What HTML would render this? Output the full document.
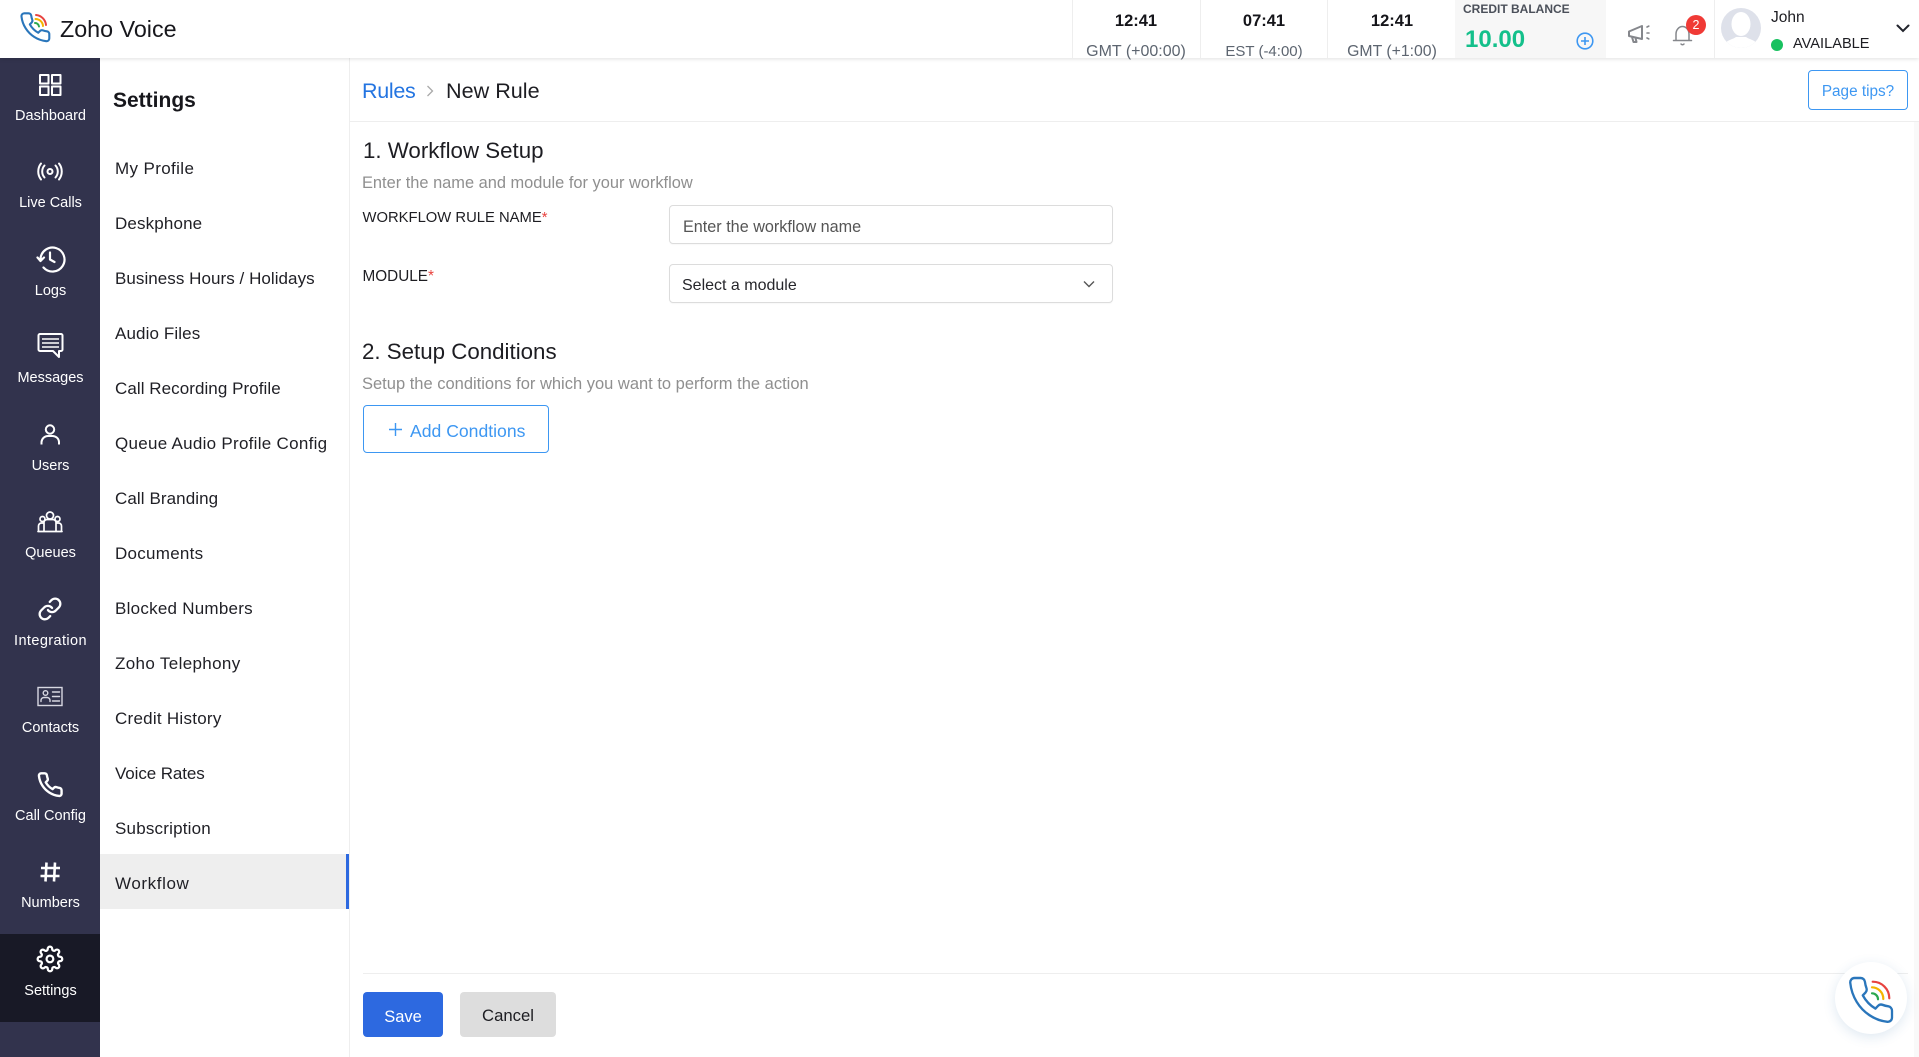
<!DOCTYPE html>
<html lang="en"><head><meta charset="utf-8"><title>Zoho Voice</title>
<style>
*{box-sizing:border-box}
html,body{margin:0;padding:0;width:1919px;height:1057px;overflow:hidden;background:#fff;font-family:"Liberation Sans",Arial,sans-serif;color:#1a1a1f}
.t{position:absolute;line-height:20px;margin-top:-9px;white-space:nowrap}
.c{transform:translateX(-50%)}
.b{position:absolute}
svg{position:absolute;overflow:visible}
.nav{font-size:14.5px;color:#fff;left:50.5px;transform:translateX(-50%)}
.ic{fill:none;stroke:#fff;stroke-width:2;stroke-linecap:round;stroke-linejoin:round}
.m{font-size:17px;left:115px;color:#1f1f25}
.tm{font-size:16.5px;font-weight:bold;color:#15151a;transform:translateX(-50%)}
.tz{font-size:16px;color:#5d6570;transform:translateX(-50%)}
.sep{position:absolute;top:0;width:1px;height:58px;background:#eeeeee}
.h2{font-size:22.3px;color:#1d1d22}
.sub{font-size:16.4px;color:#8f8f8f}
.lab{font-size:14.8px;color:#1d1d22}
.box{position:absolute;border:1px solid #dcdcdc;border-radius:4px;background:#fff;left:669px;width:444px;box-shadow:0 1px 1px rgba(0,0,0,.03)}
</style></head><body>

<!-- header -->
<div class="b" style="left:0;top:0;width:1919px;height:58px;background:#fff;box-shadow:0 1px 4px rgba(0,0,0,.12);z-index:2"></div>
<div style="position:absolute;left:0;top:0;width:1919px;height:58px;z-index:3">
<svg style="left:0;top:0" width="70" height="58" viewBox="0 0 70 58" fill="none" stroke-linecap="round">
<g transform="translate(18.5 10.5) scale(1.4)"><path stroke="#2a76bb" stroke-width="1.5" stroke-linejoin="round" d="M22 16.92v3a2 2 0 0 1-2.18 2 19.79 19.79 0 0 1-8.63-3.07 19.5 19.5 0 0 1-6-6 19.79 19.79 0 0 1-3.07-8.67A2 2 0 0 1 4.11 2h3a2 2 0 0 1 2 1.72 12.84 12.84 0 0 0 .7 2.81 2 2 0 0 1-.45 2.11L8.09 9.91a16 16 0 0 0 6 6l1.27-1.27a2 2 0 0 1 2.11-.45 12.84 12.84 0 0 0 2.81.7A2 2 0 0 1 22 16.92z"/></g>
<path d="M36 15A11 11 0 0 1 46 25" stroke="#e8433f" stroke-width="2"/>
<path d="M35.5 19A7.5 7.5 0 0 1 43 26" stroke="#f4b400" stroke-width="2"/>
<path d="M35 23A4 4 0 0 1 39 26.500" stroke="#2aa84f" stroke-width="2"/>
</svg>
<span class="t" style="left:60px;top:28px;font-size:23.3px;color:#17171c">Zoho Voice</span>

<div class="sep" style="left:1072px"></div><div class="sep" style="left:1200px"></div><div class="sep" style="left:1327px"></div>
<span class="t tm" style="left:1136px;top:20px">12:41</span><span class="t tz" style="left:1136px;top:51px">GMT (+00:00)</span>
<span class="t tm" style="left:1264px;top:20px">07:41</span><span class="t tz" style="left:1264px;top:51px;font-size:15px">EST (-4:00)</span>
<span class="t tm" style="left:1392px;top:20px">12:41</span><span class="t tz" style="left:1392px;top:51px;font-size:15.8px">GMT (+1:00)</span>

<div class="b" style="left:1455px;top:0;width:151px;height:58px;background:#f7f7f7"></div>
<span class="t" style="left:1463px;top:8px;font-size:12px;font-weight:bold;color:#4b505a">CREDIT BALANCE</span>
<span class="t" style="left:1465px;top:39px;font-size:24px;font-weight:bold;color:#14c08b">10.00</span>
<svg style="left:1576px;top:32px" width="18" height="18" viewBox="0 0 18 18" fill="none" stroke="#3d97f2" stroke-width="1.6"><circle cx="9" cy="9" r="7.8"/><path d="M5 9h8M9 5v8"/></svg>
<div class="sep" style="left:1714px"></div>

<svg style="left:1627px;top:24px" width="26" height="20" viewBox="0 0 26 20" fill="none" stroke="#85878c" stroke-width="2" stroke-linejoin="round" stroke-linecap="round"><path d="M2 7.500 15 2v13L2 12zM5 13l1.500 5h3l-1-4"/><path d="M20 3l2-1M20 9h3M20 14l2 1" stroke-width="1.600" stroke-dasharray="2 1"/></svg>
<svg style="left:1672px;top:24px" width="22" height="22" viewBox="0 0 22 22" fill="none" stroke="#85878c" stroke-width="1.500" stroke-linecap="round"><path d="M1.500 16.500h18M4 16.500V10a6.500 7.500 0 0 1 13 0v6.500M9 20c1 1 2 1 3 0"/></svg>
<div class="b" style="left:1686px;top:15px;width:20px;height:20px;border-radius:50%;background:#f03a36;color:#fff;font-size:12.5px;line-height:20px;text-align:center">2</div>

<svg style="left:1721px;top:8px" width="40" height="40" viewBox="0 0 40 40"><defs><clipPath id="av"><circle cx="20" cy="20" r="20"/></clipPath></defs><circle cx="20" cy="20" r="20" fill="#dee1ea"/><g clip-path="url(#av)"><ellipse cx="20" cy="16" rx="9.500" ry="12" fill="#fff"/><path d="M3 40c0-8 8-8 12-11h10c4 3 12 3 12 11z" fill="#fff"/></g></svg>
<span class="t" style="left:1771px;top:17px;font-size:15.5px;color:#1d1d22">John</span>
<div class="b" style="left:1771px;top:39px;width:12px;height:12px;border-radius:50%;background:#18c15f"></div>
<span class="t" style="left:1793px;top:43px;font-size:14.6px;color:#1d1d22">AVAILABLE</span>
<svg style="left:1896px;top:24px" width="14" height="9" viewBox="0 0 14 9" fill="none" stroke="#22242c" stroke-width="2" stroke-linecap="round"><path d="M1.500 1.500 7 7l5.500-5.500"/></svg>
</div>

<!-- sidebar -->
<div class="b" style="left:0;top:58px;width:100px;height:999px;background:#32334d"></div>
<div class="b" style="left:0;top:934px;width:100px;height:88px;background:#181926"></div>
<svg style="left:0;top:0" width="100" height="1057" viewBox="0 0 100 1057">
<g class="ic">
<rect x="40" y="75" width="8.500" height="8.500"/><rect x="52" y="75" width="8.500" height="8.500"/><rect x="40" y="86.500" width="8.500" height="8.500"/><rect x="52" y="86.500" width="8.500" height="8.500"/>
<circle cx="50" cy="171.500" r="2.500"/><path d="M44.500 165.500a9 9 0 0 0 0 12M55.500 165.500a9 9 0 0 1 0 12M41 163.500a13 13 0 0 0 0 16M59 163.500a13 13 0 0 1 0 16"/>
<path d="M40.500 259a12 12 0 1 1 3 8.500M37.500 257.500l3 3.500 3.500-3.500M50 252.500v7l4.500 2.500" stroke-width="2.200"/>
<path d="M40 334h21a1.500 1.500 0 0 1 1.500 1.500v14a1.500 1.500 0 0 1-1.500 1.500h-2v6l-6-6H40a1.500 1.500 0 0 1-1.500-1.500v-14A1.500 1.500 0 0 1 40 334z"/><path d="M42 339h17M42 343h17M42 347h17" stroke-linecap="butt" stroke-width="1.600"/>
<circle cx="50" cy="429.500" r="4.200"/><path d="M41.500 444.500v-2.500a6.500 6.500 0 0 1 6.500-6h4a6.500 6.500 0 0 1 7 6v2.500" stroke-linecap="butt"/>
<circle cx="50" cy="515.500" r="3.500" stroke-width="1.700"/><circle cx="42.500" cy="519" r="2.500" stroke-width="1.700"/><circle cx="57.500" cy="519" r="2.500" stroke-width="1.700"/><path d="M38.500 531v-5a3 3 0 0 1 3-3h2M61.500 531v-5a3 3 0 0 0-3-3h-2M44 531v-8a3 3 0 0 1 3-3.500h6a3 3 0 0 1 3 3.500v8M38 531.500h24" stroke-width="1.700"/>
<g transform="translate(37.500 596.500) scale(1.04)" stroke-width="2.200"><path d="M10 13a5 5 0 0 0 7.540.54l3-3a5 5 0 0 0-7.070-7.070l-1.720 1.710"/><path d="M14 11a5 5 0 0 0-7.540-.54l-3 3a5 5 0 0 0 7.070 7.070l1.710-1.710"/></g>
<g stroke="#d8d8e2" stroke-width="1.400" stroke-linejoin="miter"><rect x="38" y="687.500" width="24" height="18"/><circle cx="45.500" cy="693" r="2.300"/><path d="M41 701.500v-1.500a3 3 0 0 1 3-2.500h3a3 3 0 0 1 3 2.500v1.500M52.500 692h7M52.500 696.500h7M52.500 701h7"/></g>
<g transform="translate(36.500 771) scale(1.14)" stroke-width="2.100"><path d="M22 16.920v3a2 2 0 0 1-2.180 2 19.790 19.790 0 0 1-8.630-3.070 19.500 19.500 0 0 1-6-6 19.790 19.790 0 0 1-3.070-8.670A2 2 0 0 1 4.110 2h3a2 2 0 0 1 2 1.720 12.840 12.840 0 0 0 .7 2.810 2 2 0 0 1-.45 2.110L8.090 9.910a16 16 0 0 0 6 6l1.270-1.270a2 2 0 0 1 2.110-.45 12.840 12.840 0 0 0 2.810.7A2 2 0 0 1 22 16.920z"/></g>
<path d="M46.500 862.500l-1 19M55 862.500l-1 19M41 868h19M40.500 876h19" stroke-width="2.600" stroke-linecap="butt"/>
<g transform="translate(36.500 945.500) scale(1.12)" stroke-width="2"><circle cx="12" cy="12" r="3"/><path d="M19.400 15a1.650 1.650 0 0 0 .33 1.820l.06.06a2 2 0 0 1 0 2.830 2 2 0 0 1-2.830 0l-.06-.06a1.650 1.650 0 0 0-1.820-.33 1.650 1.650 0 0 0-1 1.510V21a2 2 0 0 1-2 2 2 2 0 0 1-2-2v-.09A1.650 1.650 0 0 0 9 19.400a1.650 1.650 0 0 0-1.820.33l-.06.06a2 2 0 0 1-2.830 0 2 2 0 0 1 0-2.830l.06-.06a1.650 1.650 0 0 0 .33-1.820 1.650 1.650 0 0 0-1.510-1H3a2 2 0 0 1-2-2 2 2 0 0 1 2-2h.09A1.650 1.650 0 0 0 4.600 9a1.650 1.650 0 0 0-.33-1.820l-.06-.06a2 2 0 0 1 0-2.830 2 2 0 0 1 2.830 0l.06.06a1.650 1.650 0 0 0 1.820.33H9a1.650 1.650 0 0 0 1-1.510V3a2 2 0 0 1 2-2 2 2 0 0 1 2 2v.09a1.650 1.650 0 0 0 1 1.510 1.650 1.650 0 0 0 1.820-.33l.06-.06a2 2 0 0 1 2.830 0 2 2 0 0 1 0 2.830l-.06.06a1.650 1.650 0 0 0-.33 1.820V9a1.650 1.650 0 0 0 1.510 1H21a2 2 0 0 1 2 2 2 2 0 0 1-2 2h-.09a1.650 1.650 0 0 0-1.510 1z"/></g>
</g></svg>
<span class="t nav" style="top:115px">Dashboard</span>
<span class="t nav" style="top:202px">Live Calls</span>
<span class="t nav" style="top:290px">Logs</span>
<span class="t nav" style="top:377px">Messages</span>
<span class="t nav" style="top:465px">Users</span>
<span class="t nav" style="top:552px">Queues</span>
<span class="t nav" style="top:640px;letter-spacing:.4px">Integration</span>
<span class="t nav" style="top:727px">Contacts</span>
<span class="t nav" style="top:815px">Call Config</span>
<span class="t nav" style="top:902px">Numbers</span>
<span class="t nav" style="top:990px">Settings</span>

<!-- settings menu -->
<div class="b" style="left:349px;top:58px;width:1px;height:999px;background:#eeeeee"></div>
<span class="t" style="left:113px;top:100px;font-size:21px;font-weight:bold;color:#17171c">Settings</span>
<div class="b" style="left:100px;top:854px;width:249px;height:55px;background:#eeeeee"></div>
<div class="b" style="left:346px;top:854px;width:3px;height:55px;background:#2d69e0"></div>
<span class="t m" style="top:167.500px;letter-spacing:.37px">My Profile</span>
<span class="t m" style="top:222.500px;letter-spacing:.14px">Deskphone</span>
<span class="t m" style="top:277.500px;letter-spacing:.05px">Business Hours / Holidays</span>
<span class="t m" style="top:332.500px;letter-spacing:.11px">Audio Files</span>
<span class="t m" style="top:387.500px;letter-spacing:.06px">Call Recording Profile</span>
<span class="t m" style="top:442.500px;letter-spacing:.28px">Queue Audio Profile Config</span>
<span class="t m" style="top:497.500px;letter-spacing:.09px">Call Branding</span>
<span class="t m" style="top:552.500px;letter-spacing:.27px">Documents</span>
<span class="t m" style="top:607.500px;letter-spacing:.25px">Blocked Numbers</span>
<span class="t m" style="top:662.500px;letter-spacing:.35px">Zoho Telephony</span>
<span class="t m" style="top:717.500px;letter-spacing:.26px">Credit History</span>
<span class="t m" style="top:772.500px;letter-spacing:-.1px">Voice Rates</span>
<span class="t m" style="top:827.500px;letter-spacing:.2px">Subscription</span>
<span class="t m" style="top:882.500px;letter-spacing:.6px">Workflow</span>

<!-- content -->
<span class="t" style="left:362px;top:90px;font-size:21.5px;letter-spacing:-.3px;color:#2374e1">Rules</span>
<svg style="left:426px;top:85px" width="8" height="12" viewBox="0 0 8 12" fill="none" stroke="#a9a9a9" stroke-width="1.300"><path d="M1.500 1 6.500 6l-5 5"/></svg>
<span class="t" style="left:446px;top:90px;font-size:21.6px;color:#1d1d22">New Rule</span>
<div class="b" style="left:350px;top:121px;width:1569px;height:1px;background:#eeeeee"></div>
<div class="b" style="left:1808px;top:70px;width:100px;height:40px;border:1px solid #3d97f2;border-radius:4px"></div>
<span class="t c" style="left:1858px;top:91px;font-size:15.3px;color:#3d97f2">Page tips?</span>

<span class="t h2" style="left:363px;top:150px">1. Workflow Setup</span>
<span class="t sub" style="left:362px;top:182px">Enter the name and module for your workflow</span>
<span class="t lab" style="left:362.500px;top:217px">WORKFLOW RULE NAME<span style="color:#e8433f">*</span></span>
<div class="box" style="top:205px;height:39px"></div>
<span class="t" style="left:683px;top:226px;font-size:16.200px;color:#555">Enter the workflow name</span>
<span class="t lab" style="left:362.500px;top:276px;font-size:15.3px">MODULE<span style="color:#e8433f">*</span></span>
<div class="box" style="top:264px;height:39px"></div>
<span class="t" style="left:682px;top:285px;font-size:16px;color:#26262b">Select a module</span>
<svg style="left:1083px;top:280px" width="12" height="8" viewBox="0 0 12 8" fill="none" stroke="#555" stroke-width="1.400"><path d="M1 1.500 6 6.500l5-5"/></svg>

<span class="t h2" style="left:362px;top:351px">2. Setup Conditions</span>
<span class="t sub" style="left:362px;top:383px;font-size:16.5px">Setup the conditions for which you want to perform the action</span>
<div class="b" style="left:363px;top:405px;width:186px;height:48px;border:1px solid #3d97f2;border-radius:4px"></div>
<svg style="left:389px;top:423px" width="13" height="13" viewBox="0 0 13 13" stroke="#3d97f2" stroke-width="1.400"><path d="M0 6.500h13M6.500 0v13"/></svg>
<span class="t" style="left:410px;top:430px;font-size:17.6px;color:#3d97f2">Add Condtions</span>

<div class="b" style="left:363px;top:973px;width:1545px;height:1px;background:#eeeeee"></div>
<div class="b" style="left:363px;top:992px;width:80px;height:45px;background:#2d69e0;border-radius:4px"></div>
<span class="t c" style="left:403px;top:1016px;font-size:16.500px;color:#fff">Save</span>
<div class="b" style="left:460px;top:992px;width:96px;height:45px;background:#dddddd;border-radius:4px"></div>
<span class="t c" style="left:508px;top:1015px;font-size:16.700px;color:#1d1d22">Cancel</span>

<div class="b" style="left:1914px;top:122px;width:5px;height:935px;background:#f9f9f9"></div>

<!-- floating button -->
<div class="b" style="left:1835px;top:962px;width:72px;height:72px;border-radius:50%;background:#fff;box-shadow:0 3px 12px rgba(50,110,170,.16)"></div>
<svg style="left:1835px;top:962px" width="72" height="72" viewBox="0 0 72 72" fill="none" stroke-linecap="round">
<g transform="translate(10.800 11.600) scale(2.1 2.2)"><path stroke="#2a76bb" stroke-width="1.100" stroke-linejoin="round" d="M22 16.920v3a2 2 0 0 1-2.180 2 19.790 19.790 0 0 1-8.630-3.070 19.500 19.500 0 0 1-6-6 19.790 19.790 0 0 1-3.070-8.670A2 2 0 0 1 4.110 2h3a2 2 0 0 1 2 1.720 12.840 12.840 0 0 0 .7 2.810 2 2 0 0 1-.45 2.110L8.090 9.910a16 16 0 0 0 6 6l1.270-1.270a2 2 0 0 1 2.110-.45 12.840 12.840 0 0 0 2.810.7A2 2 0 0 1 22 16.920z"/></g>
<path d="M37.700 19.700A16.600 16.600 0 0 1 54.300 36.300" stroke="#e8433f" stroke-width="2.200"/>
<path d="M37 25.300A11.500 11.500 0 0 1 48.300 37" stroke="#f4b400" stroke-width="2.200"/>
<path d="M37 31.300A6 6 0 0 1 43 37.300" stroke="#2aa84f" stroke-width="2.200"/>
</svg>
</body></html>
